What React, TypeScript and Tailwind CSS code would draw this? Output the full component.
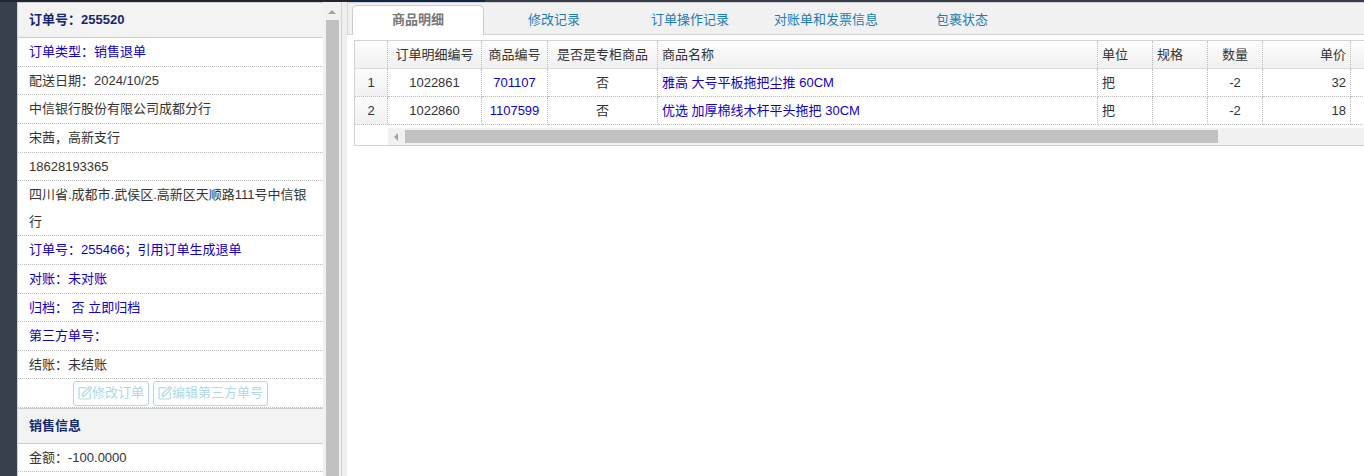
import { useState, type ReactNode } from 'react';

interface OrderLine {
  detailNo: string;
  productNo: string;
  isCounter: string;
  name: string;
  unit: string;
  spec: string;
  quantity: number;
  price: number;
}

const tabs = [
  { key: 'items', label: '商品明细' },
  { key: 'changes', label: '修改记录' },
  { key: 'operations', label: '订单操作记录' },
  { key: 'invoice', label: '对账单和发票信息' },
  { key: 'parcel', label: '包裹状态' },
];

const orderLines: OrderLine[] = [
  { detailNo: '1022861', productNo: '701107', isCounter: '否', name: '雅高 大号平板拖把尘推 60CM', unit: '把', spec: '', quantity: -2, price: 32 },
  { detailNo: '1022860', productNo: '1107599', isCounter: '否', name: '优选 加厚棉线木杆平头拖把 30CM', unit: '把', spec: '', quantity: -2, price: 18 },
];

const headCell = 'h-7 border-r border-b border-r-[#bbb] border-b-[#ddd] [border-right-style:dotted] px-1 font-normal whitespace-nowrap';
const bodyCell = 'h-7 border-r border-b border-dotted border-[#bbb] px-1 whitespace-nowrap';

function EditIcon() {
  return (
    <svg className="size-3.5 shrink-0" viewBox="0 0 14 14" fill="none" stroke="currentColor" strokeWidth="1.2" strokeLinejoin="round" aria-hidden="true">
      <path d="M8 1.600H2.200a1.200 1.200 0 0 0-1.200 1.200v9a1.200 1.200 0 0 0 1.200 1.200h8.800a1.200 1.200 0 0 0 1.200-1.200V6.500" />
      <path d="M4.200 10.300l.6-2.800 6.300-6.400a1 1 0 0 1 1.400 0l.6.6a1 1 0 0 1 0 1.400L6.800 9.600z" />
      <path d="M10 2.400l1.800 1.800" />
    </svg>
  );
}

function SectionTitle({ children }: { children: ReactNode }) {
  return (
    <h2 className="h-9 border-y border-[#ccc] bg-[#f3f3f3] px-[11px] leading-[34px] font-bold text-[#15286b]">
      {children}
    </h2>
  );
}

function InfoRow({ children }: { children: ReactNode }) {
  return <div className="border-b border-dotted border-[#bbb] px-[11px] leading-[27px]">{children}</div>;
}

function InfoRowTall({ children }: { children: ReactNode }) {
  return <div className="border-b border-dotted border-[#bbb] px-[11px] leading-7">{children}</div>;
}

function InfoLink({ children }: { children: ReactNode }) {
  return <a href="#" className="text-[#1100c4]">{children}</a>;
}

function EditButton({ children }: { children: ReactNode }) {
  return (
    <button type="button" className="flex h-[25px] items-center rounded-[3px] border border-[#add8e6] px-1 text-[#add8e6]">
      <EditIcon />
      {children}
    </button>
  );
}

export default function App() {
  const [activeTab, setActiveTab] = useState('items');

  return (
    <div className="flex h-screen flex-col overflow-hidden bg-white font-['Liberation_Sans','Noto_Sans_CJK_SC',sans-serif] text-[13px] text-[#333]">
      {/* Bottom edge of the top navigation */}
      <div className="flex h-0.5 shrink-0">
        <div className="w-[351px] bg-[#23262e]" />
        <div className="w-[134px] bg-[#0f2747]" />
        <div className="flex-1 bg-[#393d49]" />
      </div>

      <div className="flex min-h-0 flex-1">
        <div className="w-[17px] shrink-0 bg-[#36414d]" />

        <aside className="flex w-[325px] shrink-0 overflow-hidden border-x border-[#d3d3d3]">
          <div className="min-w-0 flex-1">
            <SectionTitle>订单号：255520</SectionTitle>
            <InfoRowTall><InfoLink>订单类型：销售退单</InfoLink></InfoRowTall>
            <InfoRow>配送日期：2024/10/25</InfoRow>
            <InfoRowTall>中信银行股份有限公司成都分行</InfoRowTall>
            <InfoRowTall>宋茜，高新支行</InfoRowTall>
            <InfoRow>18628193365</InfoRow>
            <InfoRow>四川省.成都市.武侯区.高新区天顺路111号中信银行</InfoRow>
            <InfoRowTall><InfoLink>订单号：255466；引用订单生成退单</InfoLink></InfoRowTall>
            <InfoRowTall><InfoLink>对账：未对账</InfoLink></InfoRowTall>
            <InfoRow><InfoLink>归档： 否 立即归档</InfoLink></InfoRow>
            <InfoRowTall><InfoLink>第三方单号：</InfoLink></InfoRowTall>
            <InfoRow>结账：未结账</InfoRow>
            <div className="flex h-[29px] items-center justify-center gap-1 border-b border-dotted border-[#bbb]">
              <EditButton>修改订单</EditButton>
              <EditButton>编辑第三方单号</EditButton>
            </div>
            <SectionTitle>销售信息</SectionTitle>
            <InfoRow>金额：-100.0000</InfoRow>
          </div>

          <div className="flex w-[18px] shrink-0 flex-col items-center bg-[#f1f1f1]">
            <svg className="h-[18px] w-2 shrink-0" viewBox="0 0 8 18" aria-hidden="true">
              <path d="M0 12h8L4 8z" fill="#a3a3a3" />
            </svg>
            <div className="w-[13px] flex-1 bg-[#c1c1c1]" />
          </div>
        </aside>

        <div className="w-[5px] shrink-0 bg-[#efefef]" />

        <main className="min-w-0 flex-1">
          <div role="tablist" className="flex h-[33px] items-end border border-r-0 border-[#d3d3d3] bg-[#f1f1f1] pl-1">
            {tabs.map((tab) => (
              <button
                key={tab.key}
                type="button"
                role="tab"
                aria-selected={tab.key === activeTab}
                onClick={() => setActiveTab(tab.key)}
                className={
                  tab.key === activeTab
                    ? '-mb-px h-[30px] w-[132px] rounded-t-[5px] border border-b-0 border-[#ccc] bg-white pb-0.5 font-bold text-[#777]'
                    : 'ml-1 h-7 w-[132px] whitespace-nowrap text-[#1c7db5]'
                }
              >
                {tab.label}
              </button>
            ))}
          </div>

          <div className="mt-[5px] ml-[7px] h-[106px] overflow-hidden border border-r-0 border-[#d3d3d3]">
            <table className="w-[1076px] table-fixed border-separate border-spacing-0">
              <colgroup>
                <col className="w-[33px]" />
                <col className="w-[94px]" />
                <col className="w-[66px]" />
                <col className="w-[110px]" />
                <col className="w-[440px]" />
                <col className="w-[55px]" />
                <col className="w-[55px]" />
                <col className="w-[55px]" />
                <col className="w-[88px]" />
                <col className="w-20" />
              </colgroup>
              <thead className="bg-linear-to-b from-[#fdfdfd] to-[#f0f0f0]">
                <tr>
                  <th className={headCell} />
                  <th className={headCell}>订单明细编号</th>
                  <th className={headCell}>商品编号</th>
                  <th className={headCell}>是否是专柜商品</th>
                  <th className={`${headCell} text-left`}>商品名称</th>
                  <th className={`${headCell} text-left`}>单位</th>
                  <th className={`${headCell} text-left`}>规格</th>
                  <th className={headCell}>数量</th>
                  <th className={`${headCell} text-right`}>单价</th>
                  <th className={headCell} />
                </tr>
              </thead>
              <tbody>
                {orderLines.map((line, index) => (
                  <tr key={line.detailNo}>
                    <td className={`${bodyCell} bg-linear-to-b from-[#fcfcfc] to-[#f1f1f1] text-center`}>{index + 1}</td>
                    <td className={`${bodyCell} text-center`}>{line.detailNo}</td>
                    <td className={`${bodyCell} text-center`}>
                      <InfoLink>{line.productNo}</InfoLink>
                    </td>
                    <td className={`${bodyCell} text-center`}>{line.isCounter}</td>
                    <td className={bodyCell}>
                      <InfoLink>{line.name}</InfoLink>
                    </td>
                    <td className={bodyCell}>{line.unit}</td>
                    <td className={bodyCell}>{line.spec}</td>
                    <td className={`${bodyCell} text-center`}>{line.quantity}</td>
                    <td className={`${bodyCell} text-right`}>{line.price}</td>
                    <td className={bodyCell} />
                  </tr>
                ))}
              </tbody>
            </table>

            <div className="mt-[3px] ml-[33px] flex h-[17px] items-center bg-[#f1f1f1]">
              <svg className="h-2 w-[17px] shrink-0" viewBox="0 0 17 8" aria-hidden="true">
                <path d="M10 0v8L6 4z" fill="#a3a3a3" />
              </svg>
              <div className="h-[13px] w-5/6 bg-[#c1c1c1]" />
            </div>
          </div>
        </main>
      </div>
    </div>
  );
}
